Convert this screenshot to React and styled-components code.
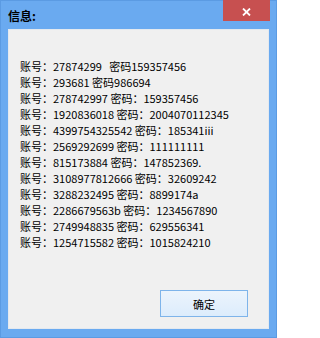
import React from 'react';
import styled, {createGlobalStyle} from 'styled-components';

const GlobalStyle = createGlobalStyle`
  html, body {
    margin: 0;
    padding: 0;
    width: 277px;
    height: 338px;
    overflow: hidden;
  }
`

const Frame = styled.div`
  box-sizing: border-box;
  width: 277px;
  height: 338px;
  display: flex;
  flex-direction: column;
  background: #6aaaf0;
  border: 1px solid #5b9be3;
  padding: 0 7px 8px 7px;
  font-family: "Noto Sans CJK SC", "Microsoft YaHei", sans-serif;
`

const TitleBar = styled.div`
  height: 28px;
  display: flex;
  align-items: flex-start;
  justify-content: space-between;
`

const Title = styled.div`
  padding-top: 6px;
  font-size: 12px;
  font-weight: 700;
  color: #000;
  line-height: 17px;
`

const CloseButton = styled.div`
  box-sizing: border-box;
  width: 47px;
  height: 21px;
  margin-top: -1px;
  margin-right: -1px;
  padding-top: 2px;
  background: #c75050;
  display: flex;
  align-items: center;
  justify-content: center;
`

const Client = styled.div`
  flex: 1;
  background: #f0f0f0;
  border: 1px solid #e4e9ef;
  display: flex;
  flex-direction: column;
  padding: 28px 0 11px 11px;
`

const Lines = styled.div`
  flex: 1;
  font-size: 11px;
  line-height: 16px;
  color: #000;
  white-space: pre;
`

const Footer = styled.div`
  display: flex;
  justify-content: flex-end;
  padding-right: 20px;
`

const OkButton = styled.div`
  box-sizing: border-box;
  width: 88px;
  height: 27px;
  border: 1px solid #7eb4ea;
  background: linear-gradient(#ecf4fc, #dcecfc);
  display: flex;
  align-items: center;
  justify-content: center;
  font-size: 11px;
  color: #000;
`

const rows = [
  '账号：27874299   密码159357456',
  '账号：293681 密码986694',
  '账号：278742997 密码：159357456',
  '账号：1920836018 密码：2004070112345',
  '账号：4399754325542 密码：185341iii',
  '账号：2569292699 密码：111111111',
  '账号：815173884 密码：147852369.',
  '账号：3108977812666 密码：32609242',
  '账号：3288232495 密码：8899174a',
  '账号：2286679563b 密码：1234567890',
  '账号：2749948835 密码：629556341',
  '账号：1254715582 密码：1015824210',
]

export default function App() {
  return (
    <>
      <GlobalStyle/>
      <Frame>
        <TitleBar>
          <Title>信息:</Title>
          <CloseButton>
            <svg width="9" height="8" viewBox="0 0 9 8">
              <path d="M1 0.5 L8 7.5 M8 0.5 L1 7.5" stroke="#fff" strokeWidth="1.8"/>
            </svg>
          </CloseButton>
        </TitleBar>
        <Client>
          <Lines>
            {rows.map((r, i) => <div key={i}>{r}</div>)}
          </Lines>
          <Footer>
            <OkButton>确定</OkButton>
          </Footer>
        </Client>
      </Frame>
    </>
  )
}
